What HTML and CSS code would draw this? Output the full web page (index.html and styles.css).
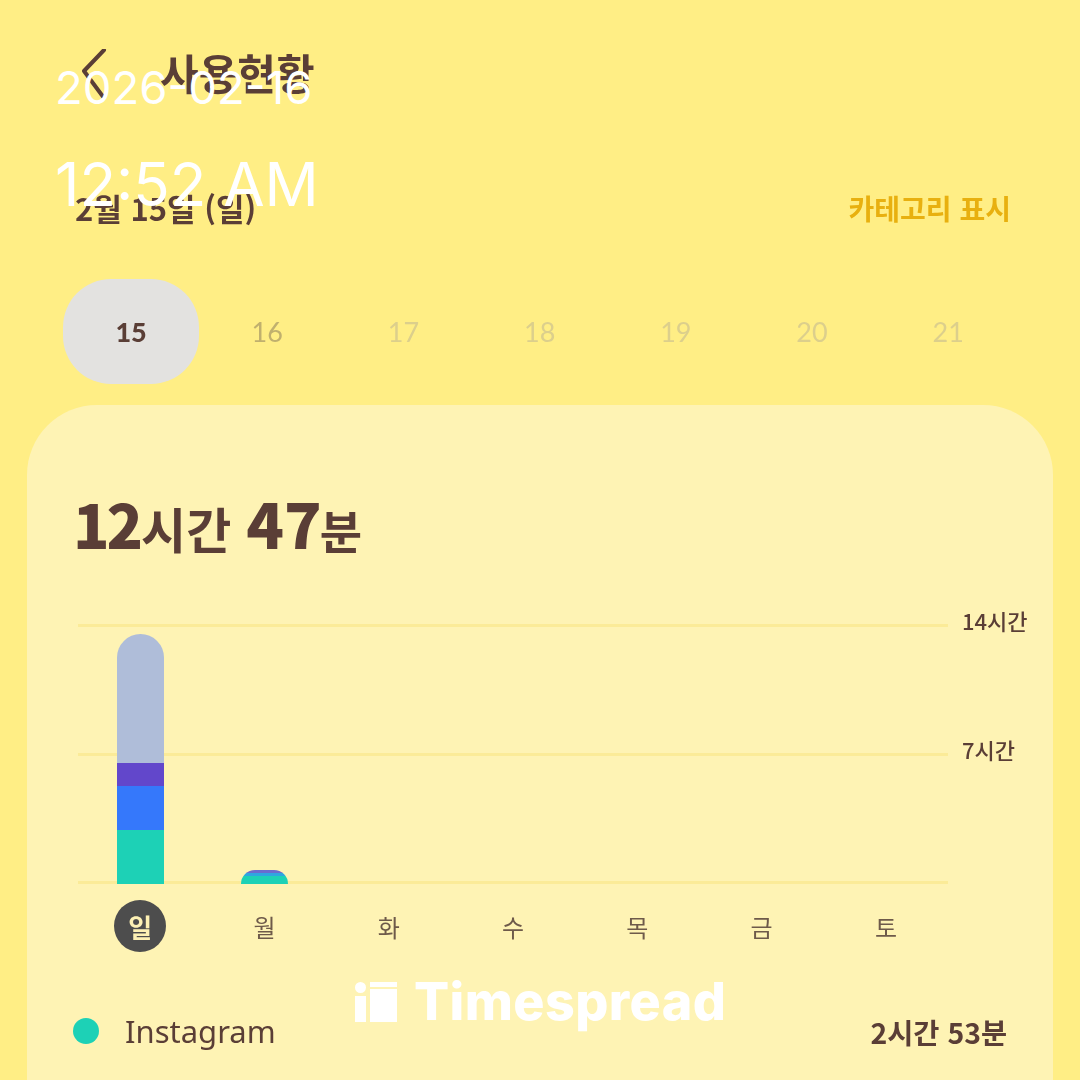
FILE: index.html
```html
<!DOCTYPE html>
<html lang="ko">
<head>
<meta charset="utf-8">
<title>사용현황</title>
<link rel="stylesheet" href="styles.css">
</head>
<body>
<div class="page">
  <div class="app">
    <header class="topbar">
      <svg class="back" width="30" height="60" viewBox="0 0 30 60" aria-hidden="true"><path d="M24 1 L4 22 L24 49" fill="none" stroke="#5a3e36" stroke-width="4" stroke-linecap="round" stroke-linejoin="round"/></svg>
      <h1 class="title">사용현황</h1>
    </header>
    <div class="daterow">
      <span class="date">2월 15일 (일)</span>
      <span class="cat">카테고리 표시</span>
    </div>
    <div class="days">
      <div class="day active">15</div>
      <div class="day near">16</div>
      <div class="day">17</div>
      <div class="day">18</div>
      <div class="day">19</div>
      <div class="day">20</div>
      <div class="day">21</div>
    </div>
    <section class="card">
      <div class="total"><b class="tight">12</b><span class="unit">시간</span><b class="wide">47</b>분</div>
      <div class="chart">
        <div class="plot">
          <div class="line"><span class="ylabel">14시간</span></div>
          <div class="line"><span class="ylabel">7시간</span></div>
          <div class="line"></div>
          <div class="bars">
            <div class="col">
              <div class="bar">
                <div class="seg s1"></div>
                <div class="seg s2"></div>
                <div class="seg s3"></div>
                <div class="seg s4"></div>
              </div>
            </div>
            <div class="col">
              <div class="bar small">
                <div class="seg t1"></div>
                <div class="seg t2"></div>
                <div class="seg t3"></div>
              </div>
            </div>
            <div class="col"></div>
            <div class="col"></div>
            <div class="col"></div>
            <div class="col"></div>
            <div class="col"></div>
          </div>
        </div>
        <div class="weekdays">
          <div class="wd"><span class="today">일</span></div>
          <div class="wd">월</div>
          <div class="wd">화</div>
          <div class="wd">수</div>
          <div class="wd">목</div>
          <div class="wd">금</div>
          <div class="wd">토</div>
        </div>
      </div>
      <div class="legend">
        <span class="dot"></span>
        <span class="app-name">Instagram</span>
        <span class="usage">2시간 53분</span>
      </div>
    </section>
  </div>
  <div class="stamp">
    <div class="stamp-date">2026-02-16</div>
    <div class="stamp-time">12:52 AM</div>
  </div>
  <div class="mark">
    <svg width="42" height="40" viewBox="0 0 42 40" aria-hidden="true" fill="#fff"><circle cx="5.5" cy="5.5" r="5.5"/><rect x="0" y="14" width="11" height="26"/><rect x="15" y="0" width="27" height="5"/><rect x="15" y="7" width="27" height="33"/></svg>
    <span class="mark-text">Timespread</span>
  </div>
</div>
</body>
</html>
```
FILE: styles.css
```css
* { box-sizing: border-box; }
html, body { margin: 0; padding: 0; }
body { width: 1080px; height: 1080px; overflow: hidden; }
.page {
  position: relative;
  width: 1080px;
  height: 1080px;
  overflow: hidden;
  background: #ffee85;
  font-family: "Noto Sans CJK KR", "Noto Sans", sans-serif;
  color: #5a3e36;
}
.app { height: 1080px; filter: blur(0.7px); }
.topbar {
  display: flex;
  align-items: flex-start;
  height: 180px;
  padding: 49px 0 0 80px;
  gap: 50px;
}
.title {
  margin: 0;
  font-size: 42px;
  font-weight: 700;
  line-height: 46px;
}
.daterow {
  display: flex;
  justify-content: space-between;
  align-items: center;
  height: 56px;
  padding: 0 69px 0 75px;
}
.date { font-size: 31px; font-weight: 700; line-height: 56px; }
.cat { font-size: 28px; font-weight: 700; color: #e8b00f; line-height: 56px; }
.days {
  display: grid;
  grid-template-columns: repeat(7, 136.2px);
  margin-top: 43px;
  padding-left: 63px;
}
.day {
  height: 105px;
  display: flex;
  align-items: center;
  justify-content: center;
  font-family: "Lato", sans-serif;
  font-size: 27px;
  font-weight: 400;
  color: #dccf8c;
}
.day.near { color: #c0b06e; }
.day.active { background: #e3e2e0; border-radius: 48px; color: #5a3e36; font-weight: 900; }
.card {
  margin: 21px 27px 0;
  height: 700px;
  padding: 72px 47px 0 48px;
  background: #fef3b4;
  border-radius: 70px 70px 0 0;
}
.total {
  display: flex;
  align-items: baseline;
  font-size: 46px;
  font-weight: 700;
  line-height: 90px;
  height: 90px;
  white-space: nowrap;
}
.total b { font-size: 62px; font-weight: 900; }
.total .tight { font-size: 60px; letter-spacing: -3px; margin-left: -2px; }
.unit { font-size: 49px; margin-left: 1px; }
.wide { margin-left: 15px; margin-right: -2px; }
.chart { margin-top: 57px; margin-left: 3px; }
.plot {
  position: relative;
  width: 870px;
  height: 260px;
  display: flex;
  flex-direction: column;
  justify-content: space-between;
}
.line { position: relative; height: 3px; background: #fbeb98; }
.ylabel {
  position: absolute;
  left: 884px;
  top: -19px;
  font-size: 22px;
  font-weight: 500;
  line-height: 30px;
  white-space: nowrap;
}
.bars {
  position: absolute;
  inset: 0 0 0 0;
  display: grid;
  grid-template-columns: repeat(7, 1fr);
  align-items: end;
}
.col { display: flex; justify-content: center; }
.bar {
  width: 47px;
  height: 250px;
  border-radius: 24px 24px 0 0;
  overflow: hidden;
  display: flex;
  flex-direction: column;
}
.seg { flex: none; }
.s1 { height: 129px; background: #afbdd9; }
.s2 { height: 23px; background: #6247cb; }
.s3 { height: 44px; background: #3578fb; }
.s4 { height: 54px; background: #1dd1b6; }
.bar.small { height: 14px; border-radius: 14px 14px 0 0; }
.t1 { height: 3px; background: #6a6ccf; }
.t2 { height: 3px; background: #2fa6e0; }
.t3 { height: 8px; background: #1dd1b6; }
.weekdays {
  display: grid;
  grid-template-columns: repeat(7, 124.3px);
  margin-top: 16px;
}
.wd {
  height: 52px;
  display: flex;
  align-items: center;
  justify-content: center;
  font-size: 24px;
  font-weight: 400;
  color: #6e5a4a;
}
.today {
  width: 52px;
  height: 52px;
  border-radius: 50%;
  background: #4d4d4d;
  color: #fdf1b4;
  display: flex;
  align-items: center;
  justify-content: center;
  font-size: 26px;
  font-weight: 700;
}
.legend {
  display: flex;
  align-items: center;
  margin-top: 57px;
  margin-left: -2px;
  margin-right: -1px;
  height: 44px;
}
.dot { width: 26px; height: 26px; border-radius: 50%; background: #1dd1b6; }
.app-name { margin-left: 26px; font-size: 31px; font-weight: 400; font-family: "Noto Sans", sans-serif; }
.usage { margin-left: auto; font-size: 28.4px; font-weight: 700; }
.stamp {
  position: absolute;
  left: 55px;
  top: 60px;
  color: #fff;
  font-family: "Inter", sans-serif;
}
.stamp-date { font-size: 45.5px; line-height: 56px; }
.stamp-time { font-size: 60px; line-height: 72px; margin-top: 32px; }
.mark {
  position: absolute;
  left: 355px;
  top: 974px;
  display: flex;
  align-items: center;
  gap: 17px;
  color: #fff;
  height: 56px;
}
.mark-text { font-family: "Inter", sans-serif; font-size: 52px; font-weight: 800; line-height: 56px; letter-spacing: 0.4px; }
```
